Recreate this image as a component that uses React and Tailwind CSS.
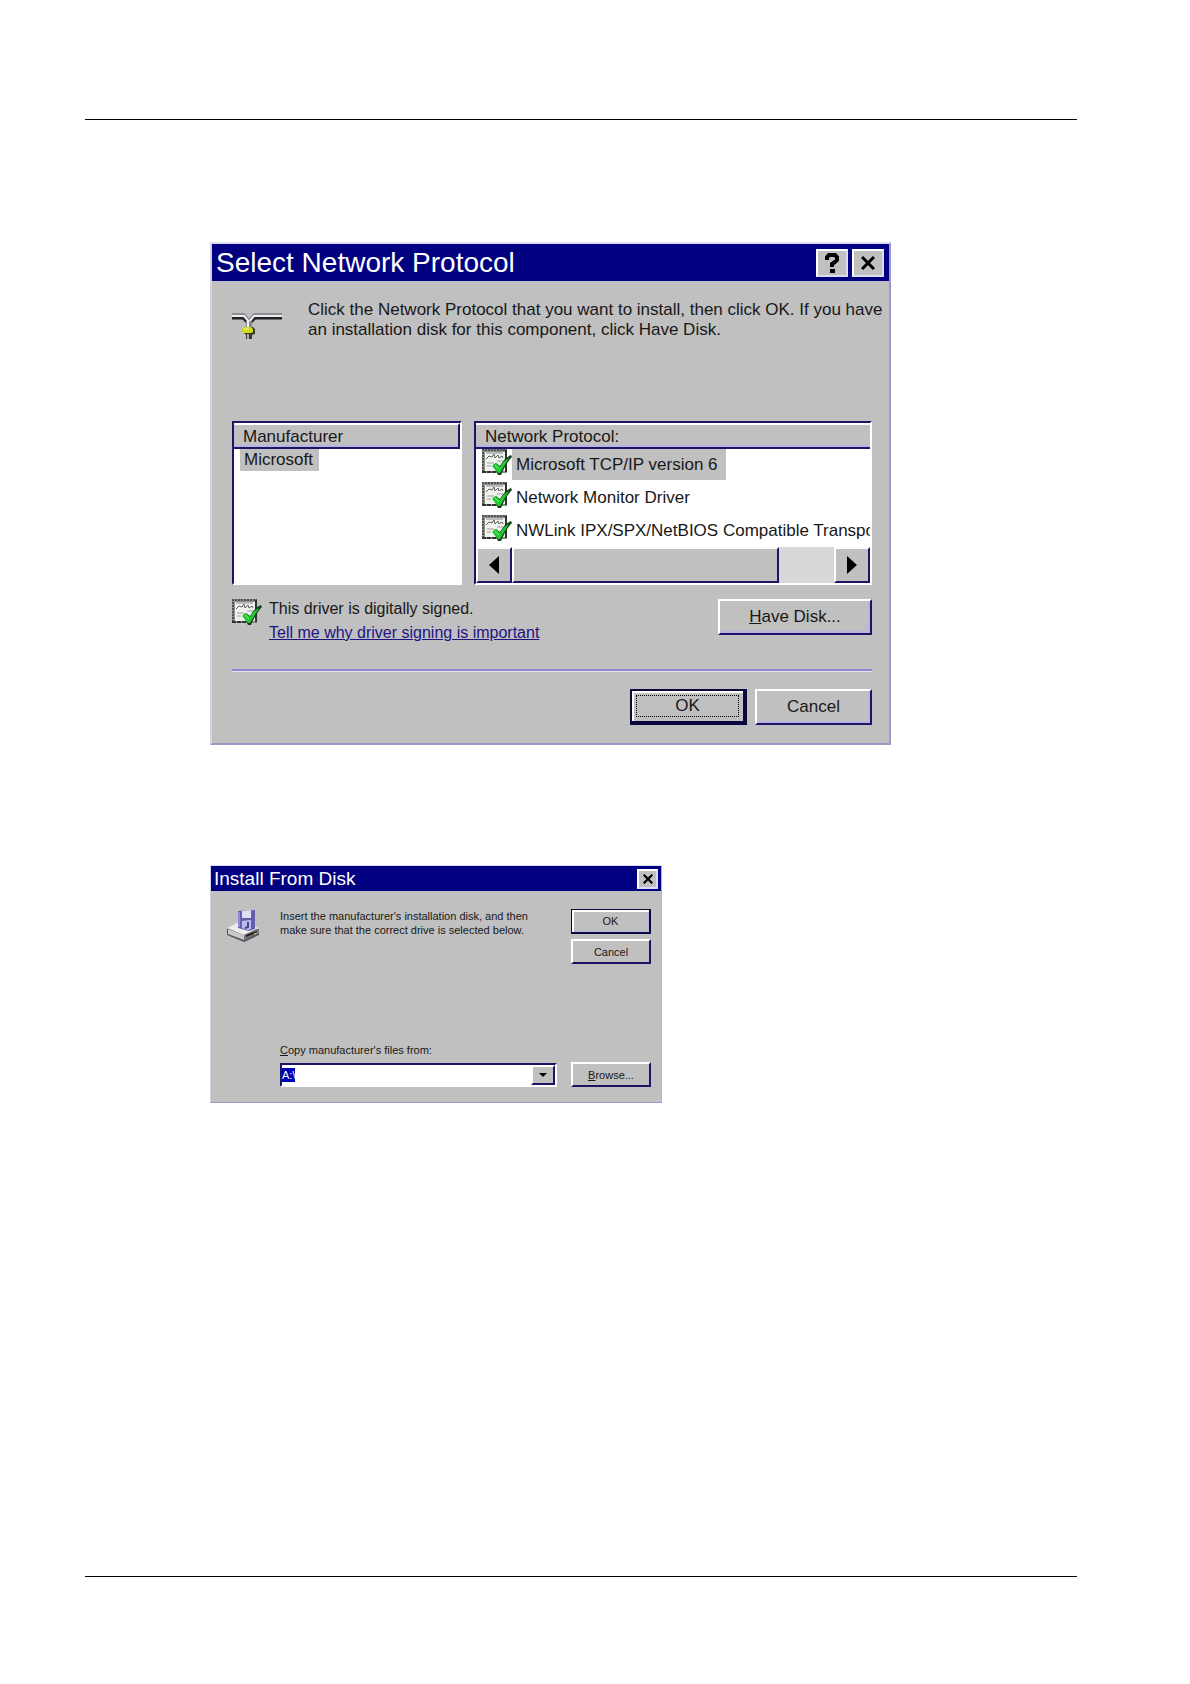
import React, { useState } from 'react';
import clsx from 'clsx';

const protocols = [
  'Microsoft TCP/IP version 6',
  'Network Monitor Driver',
  'NWLink IPX/SPX/NetBIOS Compatible Transpo',
];

const raised = 'border-2 border-t-white border-l-white border-b-[#1c1464] border-r-[#1c1464] bg-[#c0c0c0]';
const lilacEdge = 'shadow-[inset_-2px_-2px_0_#b8b4e0]';

const SignedIcon = () => (
  <svg viewBox="0 0 30 26" className="w-[30px] h-[26px] shrink-0" aria-hidden="true">
    <path d="M0 0h25v24H0z" fill="#8c908c" />
    <path d="M3 3h20v19H3z" fill="#f0f2ee" />
    <path d="M0 1h25" stroke="#50544f" strokeWidth="2" strokeDasharray="2 1" />
    <path d="M1 0v24" stroke="#50544f" strokeWidth="2" strokeDasharray="2 1" />
    <path d="M0 23h16" stroke="#2c332c" strokeWidth="2" strokeDasharray="4 1" />
    <path d="M24 1v22" stroke="#2c332c" strokeWidth="2" />
    <path d="M4 10l3-3 3 1 2-3 1 4 3-3 1 3 3-2 1 2" fill="none" stroke="#5c5c5c" strokeWidth="1" />
    <path d="M5 14h7M5 17h4M15 12h6" stroke="#9aa09a" strokeWidth="1" />
    <path d="M4 4h17" stroke="#bbb" strokeWidth="2" />
    <path d="M11 16l3-2 4 3c3-5 6-9 11-11l1 2c-5 5-8 11-11 18h-3z" fill="#123f17" />
    <path d="M10 17l4-3 4 4c2-4 5-7 9-9-3 5-6 10-9 15h-2z" fill="#22c933" />
    <path d="M13 16l4 4" stroke="#7af083" strokeWidth="1" />
  </svg>
);

const NetworkIcon = () => (
  <svg viewBox="0 0 50 28" className="w-[50px] h-7 shrink-0" aria-hidden="true">
    <path d="M0 6h11l6 6 6-6h27" fill="none" stroke="#222" strokeWidth="3" />
    <path d="M0 2h12l5 6 5-6h28" fill="none" stroke="#8d8d94" strokeWidth="2" />
    <path d="M0 4h12l5 6 5-6h28" fill="none" stroke="#ececf0" strokeWidth="2" />
    <path d="M17 9v7" stroke="#85859a" strokeWidth="6" />
    <path d="M16 9v7" stroke="#f2f2f6" strokeWidth="2" />
    <path d="M13 15h8l2 2v5l-3 1v4h-6v-4l-2-2z" fill="#3d3d28" />
    <path d="M10 17l3-2h6l2 2v3l-2 1h-7l-2-1z" fill="#cfdc1c" />
    <path d="M12 17h5" stroke="#f5fa7c" strokeWidth="1" />
    <path d="M16 22v5" stroke="#aaa" strokeWidth="2" />
  </svg>
);

const DiskIcon = () => (
  <svg viewBox="0 0 34 34" className="w-[34px] h-[34px] shrink-0" aria-hidden="true">
    <path d="M0 20l9-5 23 5v6l-15 7-17-7z" fill="#55555c" />
    <path d="M0 19l10-5 22 5-15 7z" fill="#ececec" />
    <path d="M1 20l16 6v5L1 25z" fill="#c9c9cc" />
    <path d="M17 26l15-6v4l-15 7z" fill="#77777c" />
    <path d="M19 26l11-4v2l-11 4z" fill="#222" />
    <path d="M27 25l3-1" stroke="#d8dc9c" strokeWidth="1" />
    <path d="M11 2l17-1v19l-6 2-11-3z" fill="#6260ae" />
    <path d="M15 2l9-1v8h-9z" fill="#deddf2" />
    <path d="M12 3v15" stroke="#8e8cd4" strokeWidth="2" />
    <path d="M15 12l9-1v9l-3 1-6-2z" fill="#bcbbe6" />
    <path d="M21 13v5l-3 1" fill="none" stroke="#45439a" strokeWidth="2" />
  </svg>
);

const CloseGlyph = ({ className }) => (
  <svg viewBox="0 0 14 14" className={className} aria-hidden="true">
    <path d="M1 1l12 12M13 1L1 13" stroke="#000" strokeWidth="3" />
  </svg>
);

const HelpGlyph = () => (
  <svg viewBox="0 0 16 20" className="w-4 h-5" aria-hidden="true">
    <path d="M3 7V4l2-2h6l2 2v3l-2 2-3 2v3" fill="none" stroke="#000" strokeWidth="4" />
    <path d="M6 16h5v4H6z" fill="#000" />
  </svg>
);

const Arrow = ({ flip }) => (
  <svg viewBox="0 0 10 18" className={clsx('w-[10px] h-[18px]', flip && 'rotate-180')} aria-hidden="true">
    <path d="M10 0v18L0 9z" fill="#000" />
  </svg>
);

const TitleButton = ({ label, className, children }) => (
  <button
    type="button"
    aria-label={label}
    className={clsx('flex items-center justify-center bg-[#c0c0c0] border-2 border-t-white border-l-white border-b-[#dcdcf4] border-r-[#dcdcf4]', className)}
  >
    {children}
  </button>
);

const ProtocolDialog = () => {
  const [selected, setSelected] = useState(0);

  return (
    <section className="w-[681px] max-w-full bg-[#c0c0c0] border-2 border-t-[#dcdcf4] border-l-[#d4d4e4] border-b-[#9c98cc] border-r-[#9c98cc] text-[17px] leading-5 text-[#181818]">
      <header className="flex items-center h-[37px] pl-1 pr-[5px] bg-[#000080] text-white">
        <h2 className="flex-1 text-[28px] leading-8">Select Network Protocol</h2>
        <div className="flex gap-1">
          <TitleButton label="Help" className="w-8 h-7"><HelpGlyph /></TitleButton>
          <TitleButton label="Close" className="w-8 h-7"><CloseGlyph className="w-[14px] h-[14px]" /></TitleButton>
        </div>
      </header>

      <div className="pl-5 pr-[17px] pt-[19px] pb-[18px]">
        <div className="flex h-[121px]">
          <div className="w-[76px] shrink-0 pt-3"><NetworkIcon /></div>
          <p className="whitespace-nowrap">
            Click the Network Protocol that you want to install, then click OK. If you have<br />
            an installation disk for this component, click Have Disk.
          </p>
        </div>

        {/* Lists */}
        <div className="flex gap-3 h-[164px]">
          <div className="w-[230px] flex flex-col border-2 border-t-[#1c1464] border-l-[#1c1464] border-b-white border-r-white bg-white">
            <div className="h-[26px] pl-[9px] pt-[2px] bg-[#c0c0c0] border-t-2 border-t-white border-b-2 border-r-2 border-b-[#1c1464] border-r-[#1c1464] shadow-[inset_0_-2px_0_#b8b4e0]">Manufacturer</div>
            <ul className="pl-[6px]">
              <li className="w-[79px] h-[22px] pl-1 pt-px bg-[#c0c0c0]">Microsoft</li>
            </ul>
          </div>

          <div className="flex-1 min-w-0 flex flex-col border-2 border-t-[#1c1464] border-l-[#1c1464] border-b-white border-r-white bg-white">
            <div className="h-[26px] pl-[9px] pt-[2px] bg-[#c0c0c0] border-t-2 border-t-white border-b-2 border-b-[#1c1464] shadow-[inset_0_-2px_0_#b8b4e0]">Network Protocol:</div>
            <ul className="flex-1 min-h-0 overflow-hidden pl-[6px]">
              {protocols.map((name, i) => (
                <li
                  key={name}
                  onClick={() => setSelected(i)}
                  className="flex items-start h-[33px] whitespace-nowrap"
                >
                  <SignedIcon />
                  <span className={clsx('h-[31px] pl-1 pt-[6px]', i === selected && 'pr-2 bg-[#c0c0c0]')}>{name}</span>
                </li>
              ))}
            </ul>
            <div className="flex h-9 shrink-0 bg-[#d8d8d8]">
              <button type="button" aria-label="Scroll left" className={clsx('w-9 flex items-center justify-center', raised)}><Arrow /></button>
              <div className={clsx('w-[267px]', raised)} />
              <div className="flex-1" />
              <button type="button" aria-label="Scroll right" className={clsx('w-9 flex items-center justify-center', raised)}><Arrow flip /></button>
            </div>
          </div>
        </div>

        <div className="flex items-start pt-[14px]">
          <SignedIcon />
          <div className="flex-1 pl-[7px] text-base leading-5">
            <p>This driver is digitally signed.</p>
            <a href="#signing" className="block w-fit mt-1 text-[#1c1480] underline">Tell me why driver signing is important</a>
          </div>
          <button type="button" className={clsx('w-[154px] h-9', raised, lilacEdge)}>
            <u>H</u>ave Disk...
          </button>
        </div>

        <hr className="mt-[26px] border-t-2 border-t-[#8c84d0] border-b border-b-[#e4e4f0]" />

        <div className="flex justify-end gap-2 mt-[17px]">
          <button type="button" className="w-[117px] h-9 p-1 border-2 border-r-4 border-b-4 border-[#08083c] bg-[#c0c0c0] shadow-[inset_2px_2px_0_#fff]">
            <span className="flex items-center justify-center h-full border border-dotted border-black">OK</span>
          </button>
          <button type="button" className={clsx('w-[117px] h-9', raised, lilacEdge)}>Cancel</button>
        </div>
      </div>
    </section>
  );
};

const InstallDialog = () => {
  const [path, setPath] = useState('A:\\');

  return (
    <section className="w-[452px] max-w-full bg-[#c0c0c0] border border-t-[#dcdcf4] border-l-[#d4d4e4] border-b-[#9c98cc] border-r-[#b4b0dc] text-[11px] leading-[14px] text-[#181818]">
      <header className="flex items-center h-[25px] pl-[3px] pr-[3px] bg-[#000080] text-white">
        <h2 className="flex-1 text-[19px] leading-6">Install From Disk</h2>
        <TitleButton label="Close" className="w-[21px] h-5"><CloseGlyph className="w-[10px] h-[10px]" /></TitleButton>
      </header>

      <div className="flex items-start pt-[18px] pl-4 pr-[10px]">
        <div className="w-[53px] shrink-0"><DiskIcon /></div>
        <p className="flex-1 whitespace-nowrap">
          Insert the manufacturer's installation disk, and then<br />
          make sure that the correct drive is selected below.
        </p>
        <div className="flex flex-col gap-[5px]">
          <button type="button" className="w-20 h-[25px] border border-r-2 border-b-2 border-[#08083c] bg-[#c0c0c0] shadow-[inset_2px_2px_0_#fff,inset_-1px_-1px_0_#b8b4e0]">OK</button>
          <button type="button" className={clsx('w-20 h-[25px]', raised)}>Cancel</button>
        </div>
      </div>

      <div className="flex items-end gap-[14px] mt-[79px] mb-[15px] pl-[69px] pr-[10px]">
        <div className="flex-1">
          <label htmlFor="source" className="block mb-[6px]"><u>C</u>opy manufacturer's files from:</label>
          <div className="flex h-6 border-2 border-t-[#1c1464] border-l-[#1c1464] border-b-white border-r-white bg-white">
            <input
              id="source"
              type="text"
              autoFocus
              onFocus={(e) => e.target.select()}
              value={path}
              onChange={(e) => setPath(e.target.value)}
              className="flex-1 min-w-0 outline-none selection:bg-[#0000b4] selection:text-white"
            />
            <button type="button" aria-label="Show drives" className={clsx('w-6 flex items-center justify-center', raised)}>
              <svg viewBox="0 0 8 4" className="w-2 h-1" aria-hidden="true"><path d="M0 0h8L4 4z" /></svg>
            </button>
          </div>
        </div>
        <button type="button" className={clsx('w-20 h-[25px]', raised)}><u>B</u>rowse...</button>
      </div>
    </section>
  );
};

const App = () => (
  <div className="min-h-screen flex flex-col bg-white pt-[119px] pb-[107px] pl-[85px] pr-[113px] font-['Liberation_Sans',Arial,sans-serif]">
    <main className="flex-1 flex flex-col gap-[120px] border-y border-black pt-[122px] pl-[125px]">
      <ProtocolDialog />
      <InstallDialog />
    </main>
  </div>
);

export default App;
